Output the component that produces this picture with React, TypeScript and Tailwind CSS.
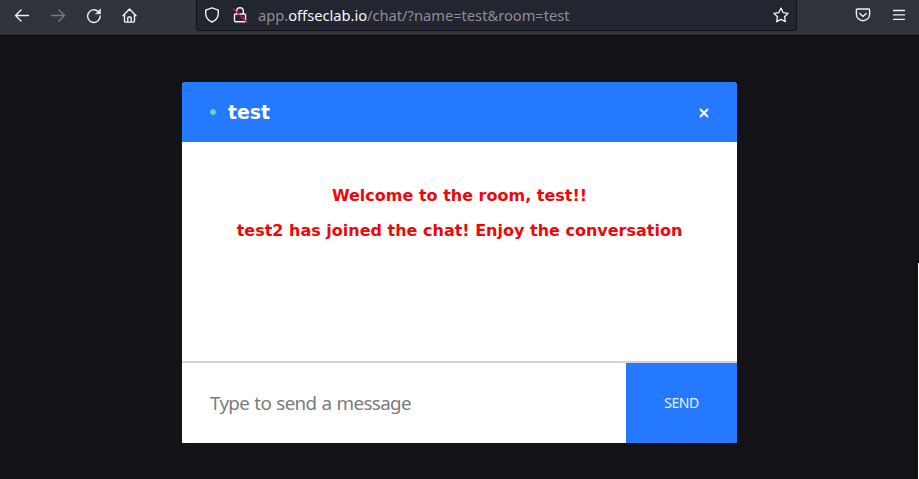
import React from "react";

const line = {
  fill: "none",
  stroke: "currentColor",
  strokeLinecap: "round" as const,
  strokeLinejoin: "round" as const,
};

function Icon({ children, className = "", width = 1.4 }: { children: React.ReactNode; className?: string; width?: number }) {
  return (
    <svg viewBox="0 0 16 16" className={`size-4 shrink-0 ${className}`} {...line} strokeWidth={width}>
      {children}
    </svg>
  );
}

function Toolbar() {
  return (
    <header className="flex h-9 shrink-0 items-start border-b border-[#08090c] bg-[#31333c] text-[#f0f0f4]">
      <div className="flex w-[196px] shrink-0 gap-5 pt-2 pl-3.5">
        <Icon><path d="M14.5 7.5H1.5M7 2 1.5 7.5 7 13" /></Icon>
        <Icon className="text-[#777982]"><path d="M1.5 7.5h13M9 2l5.5 5.5L9 13" /></Icon>
        <Icon>
          <path d="M14.2 8A6.3 6.3 0 1 1 12.2 3.5" />
          <path d="M14.5 1.2v4.6H9.9z" fill="currentColor" strokeWidth=".6" />
        </Icon>
        <Icon>
          <path d="M1 7.8 7.5 1 14 7.8M2.5 6.5v6.4a1.2 1.2 0 0 0 1.2 1.2h7.6a1.2 1.2 0 0 0 1.2-1.2V6.5M5.8 14V9.8a.8.8 0 0 1 .8-.8h1.8a.8.8 0 0 1 .8.8V14" />
        </Icon>
      </div>
      <div className="flex h-[31px] w-[601px] shrink-0 rounded-b-[4px] border border-t-0 border-[#101119] bg-[#232530] px-[7px] pt-[7px]">
        <Icon><path d="M8 .9 14.3 3.2v3.3C14.3 10.4 11.7 13.4 8 15 4.3 13.4 1.7 10.4 1.7 6.5V3.2z" /></Icon>
        <Icon className="ml-3">
          <path d="M4.7 7V4a3.3 3.3 0 0 1 6.6 0v3M3.4 7h9.2a.9.9 0 0 1 .9.9v5.7a1.2 1.2 0 0 1-1.2 1.2H3.7a1.2 1.2 0 0 1-1.2-1.2V7.9a.9.9 0 0 1 .9-.9" />
          <path d="m1.5 2 13.3 13" className="stroke-[#dd174f]" />
        </Icon>
        <div className="-mt-px ml-2.5 flex-1 font-['Noto_Sans',sans-serif] text-[14.67px] leading-[18px] whitespace-nowrap text-[#8d8e96]">
          app.<span className="text-[#f7f7fb]">offseclab.io</span>/chat/?name=test&amp;room=test
        </div>
        <Icon width={1.3}><path d="m8 1.1 2.1 4.5 5 .7-3.6 3.4.9 4.9L8 12.3l-4.4 2.3.9-4.9L.9 6.3l5-.7z" /></Icon>
      </div>
      <div className="ml-[58px] flex gap-5 pt-[7px]">
        <Icon>
          <path d="M2.3 2h11.4a.9.9 0 0 1 .9.9v4.3a6.6 6.6 0 0 1-13.2 0V2.9a.9.9 0 0 1 .9-.9zM4.8 6.5 8 9.5l3.2-3" />
        </Icon>
        <Icon width={1.3}><path d="M2.5 3.5h11M2.5 7.9h11M2.5 12.3h11" /></Icon>
      </div>
    </header>
  );
}

export default function App() {
  return (
    <div className="relative flex h-[479px] w-[919px] flex-col overflow-hidden bg-[#131317]">
      <Toolbar />
      <main className="flex flex-1 justify-center pt-[46px]">
        <section className="flex h-[361px] w-[555px] flex-col overflow-hidden rounded-t-[4px] bg-white">
          <div className="flex h-[60px] items-center justify-between bg-[#2579ff] px-7 text-white">
            <div className="flex items-center">
              <span className="mr-3 size-1.5 rounded-full border border-[#58e2a5] bg-[#65dcc0]" />
              <h3 className="font-['DejaVu_Sans',sans-serif] text-[18.9px] leading-6 font-bold">test</h3>
            </div>
            <svg viewBox="0 0 10 10" className="mt-0.5 size-2.5" fill="none" stroke="currentColor" strokeWidth="2">
              <path d="m1 1 8 8M9 1 1 9" />
            </svg>
          </div>
          <div className="flex h-[219px] flex-col items-center gap-4 pt-11 font-['DejaVu_Sans',sans-serif] text-base leading-[19px] font-bold whitespace-nowrap text-[#f40505]">
            <p>Welcome to the room, test!!</p>
            <p>test2 has joined the chat! Enjoy the conversation</p>
          </div>
          <form className="flex h-[82px] border-t-2 border-[#d3d3d3] font-['Noto_Sans',sans-serif]">
            <input
              className="w-[444px] bg-white px-7 pt-px text-[18.8px] tracking-[-0.65px] text-[#333] outline-none [word-spacing:0.9px] placeholder:text-[#7b7b7b]"
              placeholder="Type to send a message"
            />
            <button type="button" className="w-[111px] bg-[#2579ff] pb-0.5 text-[14px] tracking-[-0.4px] text-[#e6f1ff]">SEND</button>
          </form>
        </section>
      </main>
      <div className="absolute right-0 bottom-0 h-[216px] w-px bg-white" />
    </div>
  );
}
